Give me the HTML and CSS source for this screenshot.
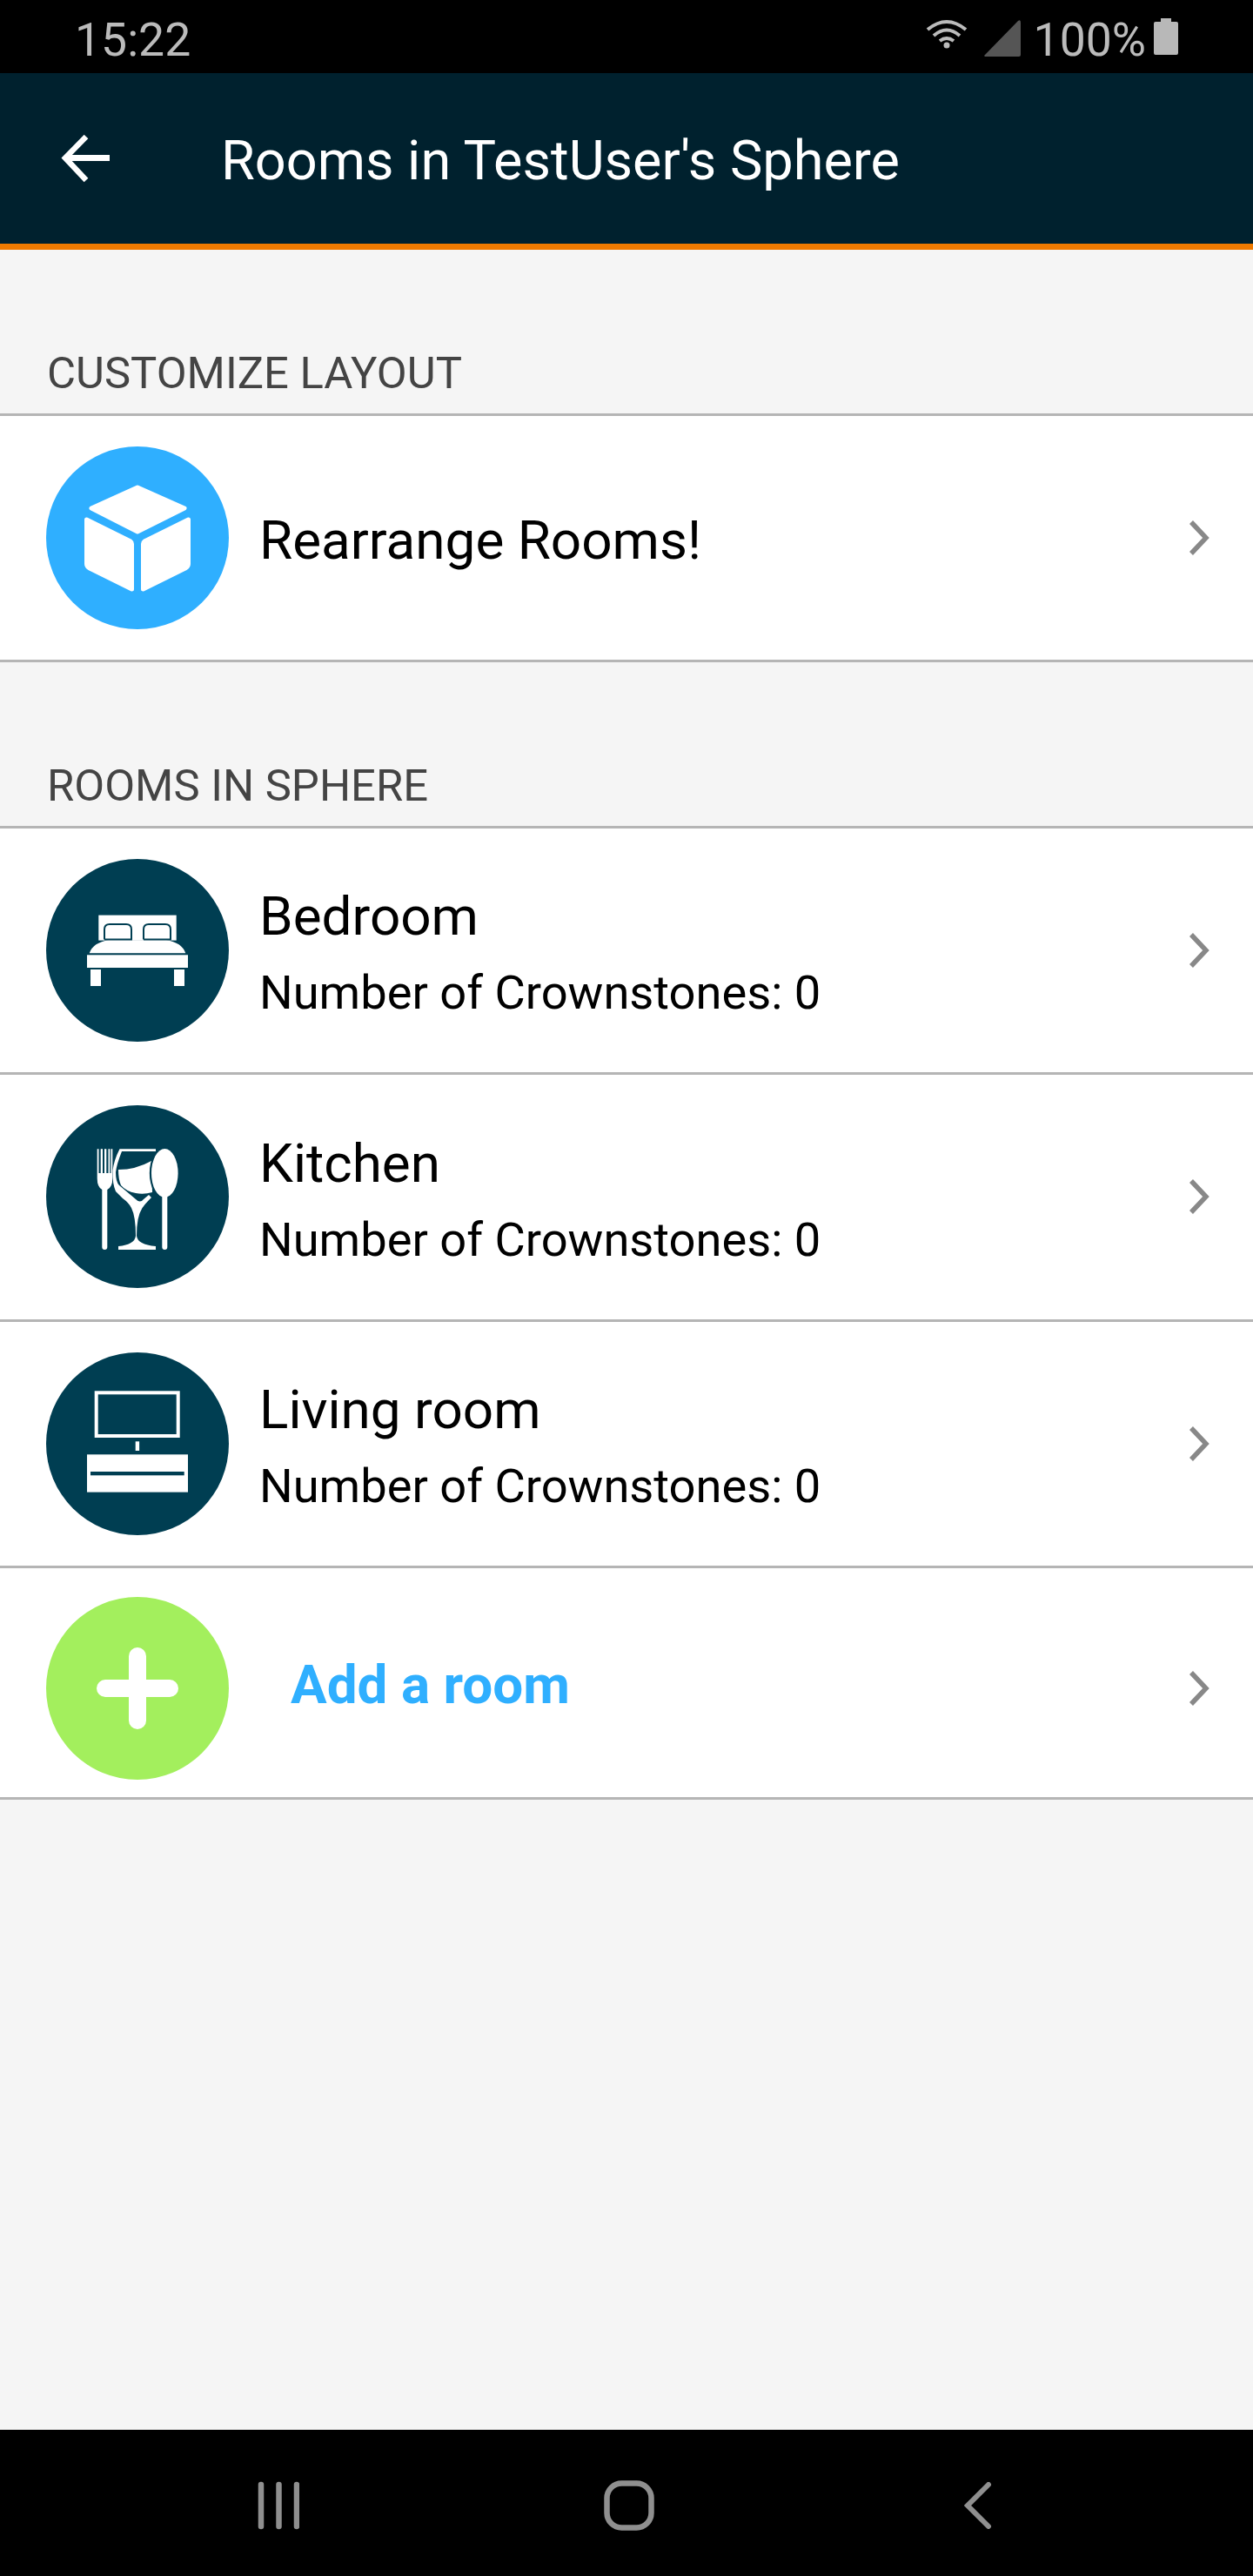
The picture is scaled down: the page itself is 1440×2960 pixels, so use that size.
FILE: index.html
```html
<!DOCTYPE html>
<html lang="en">
<head>
<meta charset="utf-8">
<title>Rooms in TestUser's Sphere</title>
<link rel="stylesheet" href="styles.css">
</head>
<body>
<div class="phone">
  <div class="status">
    <span class="time">15:22</span>
    <div class="status-right">
      <svg class="wifi" width="48" height="36" viewBox="0 0 48 36"><g fill="none" stroke="#bbb" stroke-width="4"><path d="M2 13 Q24 -5 46 13"/><path d="M9 20 Q24 7 39 20"/><path d="M16 26 Q24 20 32 26"/></g><circle cx="24" cy="31" r="3.5" fill="#bbb"/></svg>
      <svg class="signal" width="42" height="42" viewBox="0 0 42 42"><path d="M0 41 L39 1 Q42 -1 42 3 V40 Q42 42 40 42 H1 Z" fill="#555"/></svg>
      <span class="batt-text">100%</span>
      <svg class="battery" width="28" height="42" viewBox="0 0 28 42"><path d="M8 0 H20 V4 H26 Q28 4 28 6 V40 Q28 42 26 42 H2 Q0 42 0 40 V6 Q0 4 2 4 H8 Z" fill="#b8b8b8"/></svg>
    </div>
  </div>
  <header class="header">
    <svg class="back" width="60" height="56" viewBox="0 0 60 56"><path d="M56 27.500 H5" fill="none" stroke="#fff" stroke-width="7"/><path d="M29 3 L5 27.500 L29 53" fill="none" stroke="#fff" stroke-width="6.500"/></svg>
    <h1 class="title">Rooms in TestUser's Sphere</h1>
  </header>
  <main class="content">
    <h2 class="section">CUSTOMIZE LAYOUT</h2>
    <ul class="list">
      <li class="row">
        <svg class="icon" width="210" height="210" viewBox="0 0 210 210"><circle cx="105" cy="105" r="105" fill="#2fafff"/><g fill="#fff" stroke="#fff" stroke-width="5" stroke-linejoin="round"><path d="M105 47 L159 71 L105 98 L52 71 Z"/><path d="M46.500 84 L97 109 Q98.500 110 98.500 112 V164 L50 140 Q46.500 138 46.500 135 Z"/><path d="M163.500 84 L113 109 Q111.500 110 111.500 112 V164 L160 140 Q163.500 138 163.500 135 Z"/></g></svg>
        <div class="text"><div class="name">Rearrange Rooms!</div></div>
        <svg class="chev" width="24" height="40" viewBox="0 0 24 40"><path d="M3 2 L20 20 L3 38" fill="none" stroke="#888" stroke-width="5.500"/></svg>
      </li>
    </ul>
    <h2 class="section">ROOMS IN SPHERE</h2>
    <ul class="list">
      <li class="row">
        <svg class="icon" width="210" height="210" viewBox="0 0 210 210"><circle cx="105" cy="105" r="105" fill="#003e52"/><g fill="#fff"><rect x="60.300" y="64.600" width="89.400" height="29"/><path d="M49.700 108.300 Q54 96 72 93.300 H138 Q156 96 160.300 108.300 Z"/><rect x="47" y="110.300" width="116" height="14.700"/><rect x="51" y="127" width="12" height="19"/><rect x="147" y="127" width="12" height="19"/></g><g fill="none" stroke="#003e52" stroke-width="2"><path d="M67 92.600 V81 Q67 75 73 75 H92 Q98 75 98 81 V92.600 H67"/><path d="M112 92.600 V81 Q112 75 118 75 H137 Q143 75 143 81 V92.600 H112"/></g></svg>
        <div class="text"><div class="name">Bedroom</div><div class="sub">Number of Crownstones: 0</div></div>
        <svg class="chev" width="24" height="40" viewBox="0 0 24 40"><path d="M3 2 L20 20 L3 38" fill="none" stroke="#888" stroke-width="5.500"/></svg>
      </li>
      <li class="row">
        <svg class="icon" width="210" height="210" viewBox="0 0 210 210"><circle cx="105" cy="105" r="105" fill="#003e52"/><g fill="#fff"><path d="M58.700 50.300 H60.500 V78 H62.700 V50.300 H65 V78 H67 V50.300 H69.300 V78 H71.500 V50.300 H73.300 V78 H74.500 V50.300 H76.300 V84 Q76.300 94 70.300 97 V163 A3 3 0 0 1 64.300 163 V97 Q58.700 94 58.700 84 Z"/><path d="M84.500 50.300 H126 V53 H87 Q81 68 80 77 Q80 88 84 92 L103 108 Q108 113 112 108 L118 103 L121 106 Q114 113 110.500 118 Q104 128 104 150 Q105 160 126 162 V166 H83 V162 Q102 160 103 150 Q103 128 98 118 Q95 112 88 107 L80 99 Q76 90 76.500 75 Q78 63 84.500 50.300 Z"/><path d="M83 74 Q103 74 121 64 L122 100 Q112 103 103 101 Q92 99 86 92 Q83 85 83 74 Z"/></g><ellipse cx="136.300" cy="78" rx="17.500" ry="30" fill="#003e52"/><ellipse cx="136.300" cy="78" rx="15.300" ry="28" fill="#fff"/><path d="M136.300 100 V163" stroke="#fff" stroke-width="6" stroke-linecap="round"/></svg>
        <div class="text"><div class="name">Kitchen</div><div class="sub">Number of Crownstones: 0</div></div>
        <svg class="chev" width="24" height="40" viewBox="0 0 24 40"><path d="M3 2 L20 20 L3 38" fill="none" stroke="#888" stroke-width="5.500"/></svg>
      </li>
      <li class="row">
        <svg class="icon" width="210" height="210" viewBox="0 0 210 210"><circle cx="105" cy="105" r="105" fill="#003e52"/><rect x="57.700" y="46.300" width="94" height="49.700" fill="none" stroke="#fff" stroke-width="4"/><rect x="102.700" y="102.300" width="4.400" height="10.700" fill="#fff"/><rect x="47" y="117.300" width="116" height="43.300" fill="#fff"/><rect x="51" y="137" width="107.700" height="4.300" fill="#003e52"/></svg>
        <div class="text"><div class="name">Living room</div><div class="sub">Number of Crownstones: 0</div></div>
        <svg class="chev" width="24" height="40" viewBox="0 0 24 40"><path d="M3 2 L20 20 L3 38" fill="none" stroke="#888" stroke-width="5.500"/></svg>
      </li>
      <li class="row row-add">
        <svg class="icon" width="210" height="210" viewBox="0 0 210 210"><circle cx="105" cy="105" r="105" fill="#a3ef5d"/><rect x="58" y="95" width="94" height="20" rx="10" fill="#fff"/><rect x="95" y="58" width="20" height="94" rx="10" fill="#fff"/></svg>
        <div class="text"><div class="add">Add a room</div></div>
        <svg class="chev" width="24" height="40" viewBox="0 0 24 40"><path d="M3 2 L20 20 L3 38" fill="none" stroke="#888" stroke-width="5.500"/></svg>
      </li>
    </ul>
  </main>
  <nav class="navbar">
    <svg width="48" height="56" viewBox="0 0 48 56" class="nav-recent"><g stroke="#8f8f8f" stroke-width="6.500" stroke-linecap="round"><path d="M4 4 V52"/><path d="M24.500 4 V52"/><path d="M45 4 V52"/></g></svg>
    <svg width="58" height="58" viewBox="0 0 58 58" class="nav-home"><rect x="3.500" y="3.500" width="51" height="51" rx="17" fill="none" stroke="#8f8f8f" stroke-width="6.500"/></svg>
    <svg width="32" height="54" viewBox="0 0 32 54" class="nav-back"><path d="M28 3 L4 27 L28 51" fill="none" stroke="#8f8f8f" stroke-width="6" stroke-linecap="round"/></svg>
  </nav>
</div>
</body>
</html>
```

FILE: styles.css
```css
* { box-sizing: border-box; }
html, body { margin: 0; padding: 0; }
body { font-family: Roboto, "Liberation Sans", sans-serif; background: #000; }
.phone { width: 1440px; height: 2960px; display: flex; flex-direction: column; overflow: hidden; }
.status { height: 84px; background: #000; color: #bbb; display: flex; align-items: center; justify-content: space-between; padding: 0 86px 0 86px; }
.time, .batt-text { font-size: 53.5px; line-height: 84px; padding-top: 7px; }
.batt-text { margin: 0 -3px 0 3px; }
.status-right { display: flex; align-items: center; gap: 12px; }
.wifi { margin-bottom: 6px; margin-right: 7px; }
.signal { margin-top: 4px; }
.header { height: 203px; background: #00212e; border-bottom: 7px solid #ee7a00; display: flex; align-items: center; padding: 0 0 0 70px; }
.back { flex: none; }
.title { margin: 6px 0 0 124px; font-size: 63px; font-weight: 400; color: #fff; line-height: 76px; }
.content { flex: 1; background: #f5f5f5; }
.section { margin: 0; height: 187.500px; padding: 0 0 18px 54px; font-size: 50.750px; font-weight: 400; color: #444; line-height: 56px; display: flex; align-items: flex-end; }
.list { list-style: none; margin: 0; padding: 0; border-top: 3px solid #b5b5b5; background: #fff; }
.row { height: 283.500px; border-bottom: 3px solid #b5b5b5; display: flex; align-items: center; padding: 0 50px 0 53px; background: #fff; }
.row-add { height: 265.500px; padding-top: 14px; }
.icon { flex: none; }
.text { flex: 1; margin-left: 35px; padding-top: 7px; }
.name { font-size: 62px; line-height: 70px; color: #000; }
.sub { font-size: 54.250px; line-height: 62px; color: #000; margin-top: 22px; }
.add { font-size: 62px; font-weight: 700; color: #2fafff; margin: 0 0 15px 36px; line-height: 70px; }
.chev { flex: none; }
.navbar { height: 168px; background: #000; display: flex; align-items: center; padding: 5px 0 0 296px; }
.nav-home { margin-left: 350px; }
.nav-back { margin-left: 356px; }
```
